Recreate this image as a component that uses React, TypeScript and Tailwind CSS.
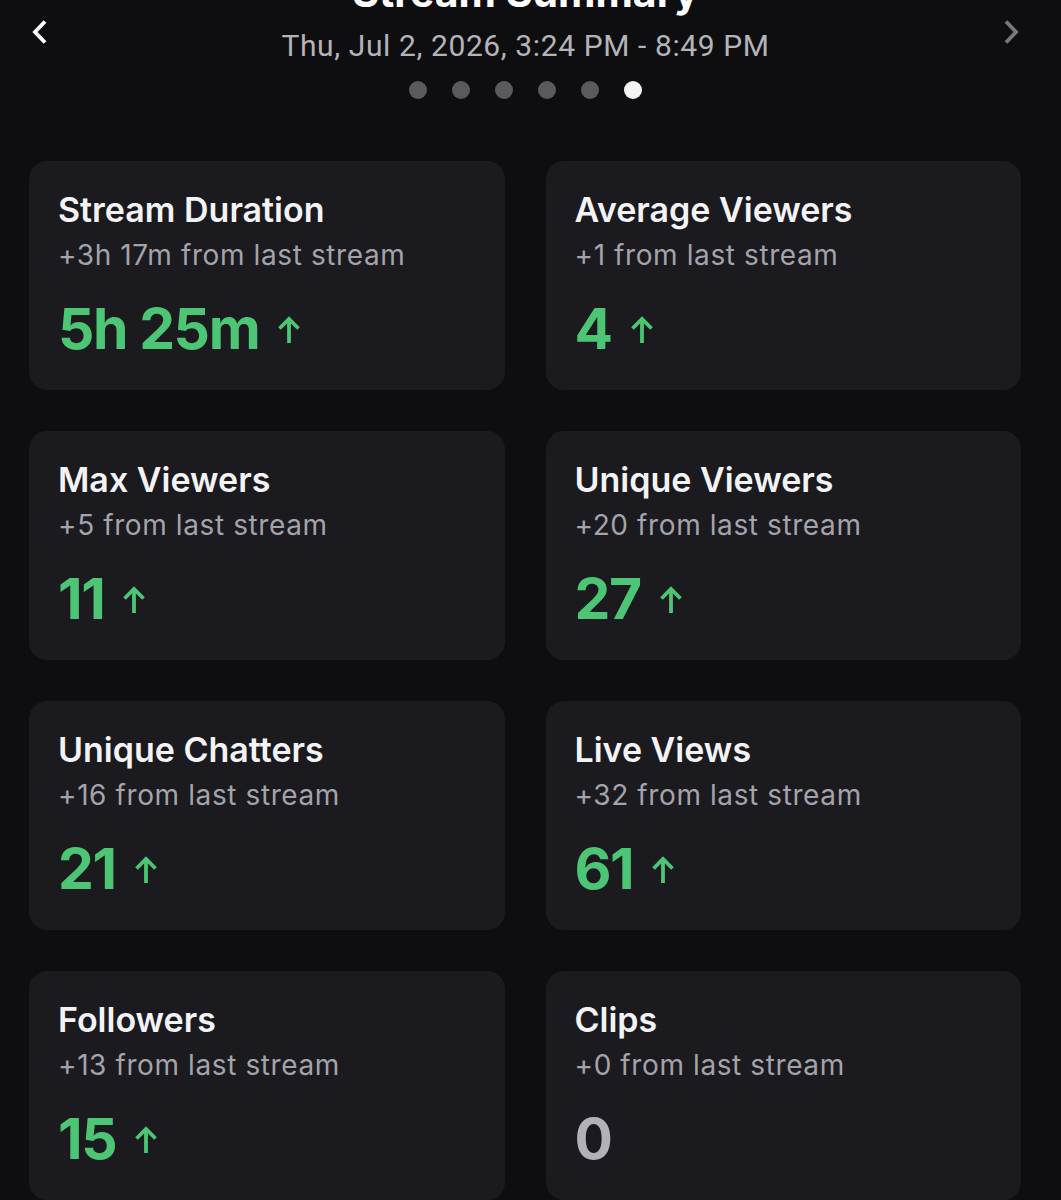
import React from "react";

type Stat = {
	title: string;
	delta: string;
	value: string;
	up: boolean;
};

const stats: Stat[] = [
	{ title: "Stream Duration", delta: "+3h 17m from last stream", value: "5h 25m", up: true },
	{ title: "Average Viewers", delta: "+1 from last stream", value: "4", up: true },
	{ title: "Max Viewers", delta: "+5 from last stream", value: "11", up: true },
	{ title: "Unique Viewers", delta: "+20 from last stream", value: "27", up: true },
	{ title: "Unique Chatters", delta: "+16 from last stream", value: "21", up: true },
	{ title: "Live Views", delta: "+32 from last stream", value: "61", up: true },
	{ title: "Followers", delta: "+13 from last stream", value: "15", up: true },
	{ title: "Clips", delta: "+0 from last stream", value: "0", up: false }
];

function UpArrow() {
	return (
		<svg width="24" height="27" viewBox="0 0 24 27" fill="none" stroke="#4cc674" strokeWidth="3.8" strokeLinejoin="miter">
			<polyline points="2.5,12.5 12,3 21.5,12.5" />
			<line x1="12" y1="3.5" x2="12" y2="27" />
		</svg>
	);
}

function StatCard({ stat }: { stat: Stat }) {
	return (
		<div className="h-[229px] rounded-[18px] bg-[#1a1a1f] px-[29px] pt-[28px]">
			<div className="text-[34px] leading-[42px] font-semibold text-[#f3f3f5]">{stat.title}</div>
			<div className="mt-[7px] text-[28px] leading-[34px] tracking-[0.6px] text-[#a3a3ab]">{stat.delta}</div>
			<div className="mt-[25px] flex flex-row items-center gap-[18px]">
				<span
					className={
						"text-[57px] leading-[64px] font-bold tracking-tight " + (stat.up ? "text-[#4cc674]" : "text-[#b1b1b8]")
					}
				>
					{stat.value}
				</span>
				{stat.up && <UpArrow />}
			</div>
		</div>
	);
}

export default function App() {
	return (
		<div className="h-[1200px] w-[1061px] overflow-hidden bg-[#0e0e11]" style={{ fontFamily: "Inter, 'Noto Sans', sans-serif" }}>
			{/* header */}
			<div className="flex flex-row items-start">
				<svg className="ml-[30px] mt-[18px]" width="20" height="28" viewBox="0 0 20 28" fill="none" stroke="#ffffff" strokeWidth="3.8">
					<polyline points="15,3.5 5,14 15,24.5" />
				</svg>
				<div className="-mt-[32px] flex flex-1 flex-col items-center">
					<h1 className="text-[41px] leading-[48px] font-bold text-white">Stream Summary</h1>
					<div
						className="mt-[13px] text-[30px] leading-[34px] tracking-[0.6px] text-[#b4b4b8]"
						style={{ fontFamily: "Roboto, 'Liberation Sans', sans-serif" }}
					>
						Thu, Jul 2, 2026, 3:24 PM - 8:49 PM
					</div>
					<div className="mt-[18px] flex flex-row gap-[25px]">
						<div className="h-[18px] w-[18px] rounded-full bg-[#5a5a5e]" />
						<div className="h-[18px] w-[18px] rounded-full bg-[#5a5a5e]" />
						<div className="h-[18px] w-[18px] rounded-full bg-[#5a5a5e]" />
						<div className="h-[18px] w-[18px] rounded-full bg-[#5a5a5e]" />
						<div className="h-[18px] w-[18px] rounded-full bg-[#5a5a5e]" />
						<div className="h-[18px] w-[18px] rounded-full bg-[#f4f4f4]" />
					</div>
				</div>
				<svg className="mr-[40px] mt-[18px]" width="20" height="28" viewBox="0 0 20 28" fill="none" stroke="#78787c" strokeWidth="3.8">
					<polyline points="5,3.5 15,14 5,24.5" />
				</svg>
			</div>

			{/* stat cards */}
			<div className="mt-[62px] grid grid-cols-2 gap-x-[41px] gap-y-[41px] pl-[29px] pr-[40px]">
				{stats.map((stat) => (
					<StatCard key={stat.title} stat={stat} />
				))}
			</div>
		</div>
	);
}
